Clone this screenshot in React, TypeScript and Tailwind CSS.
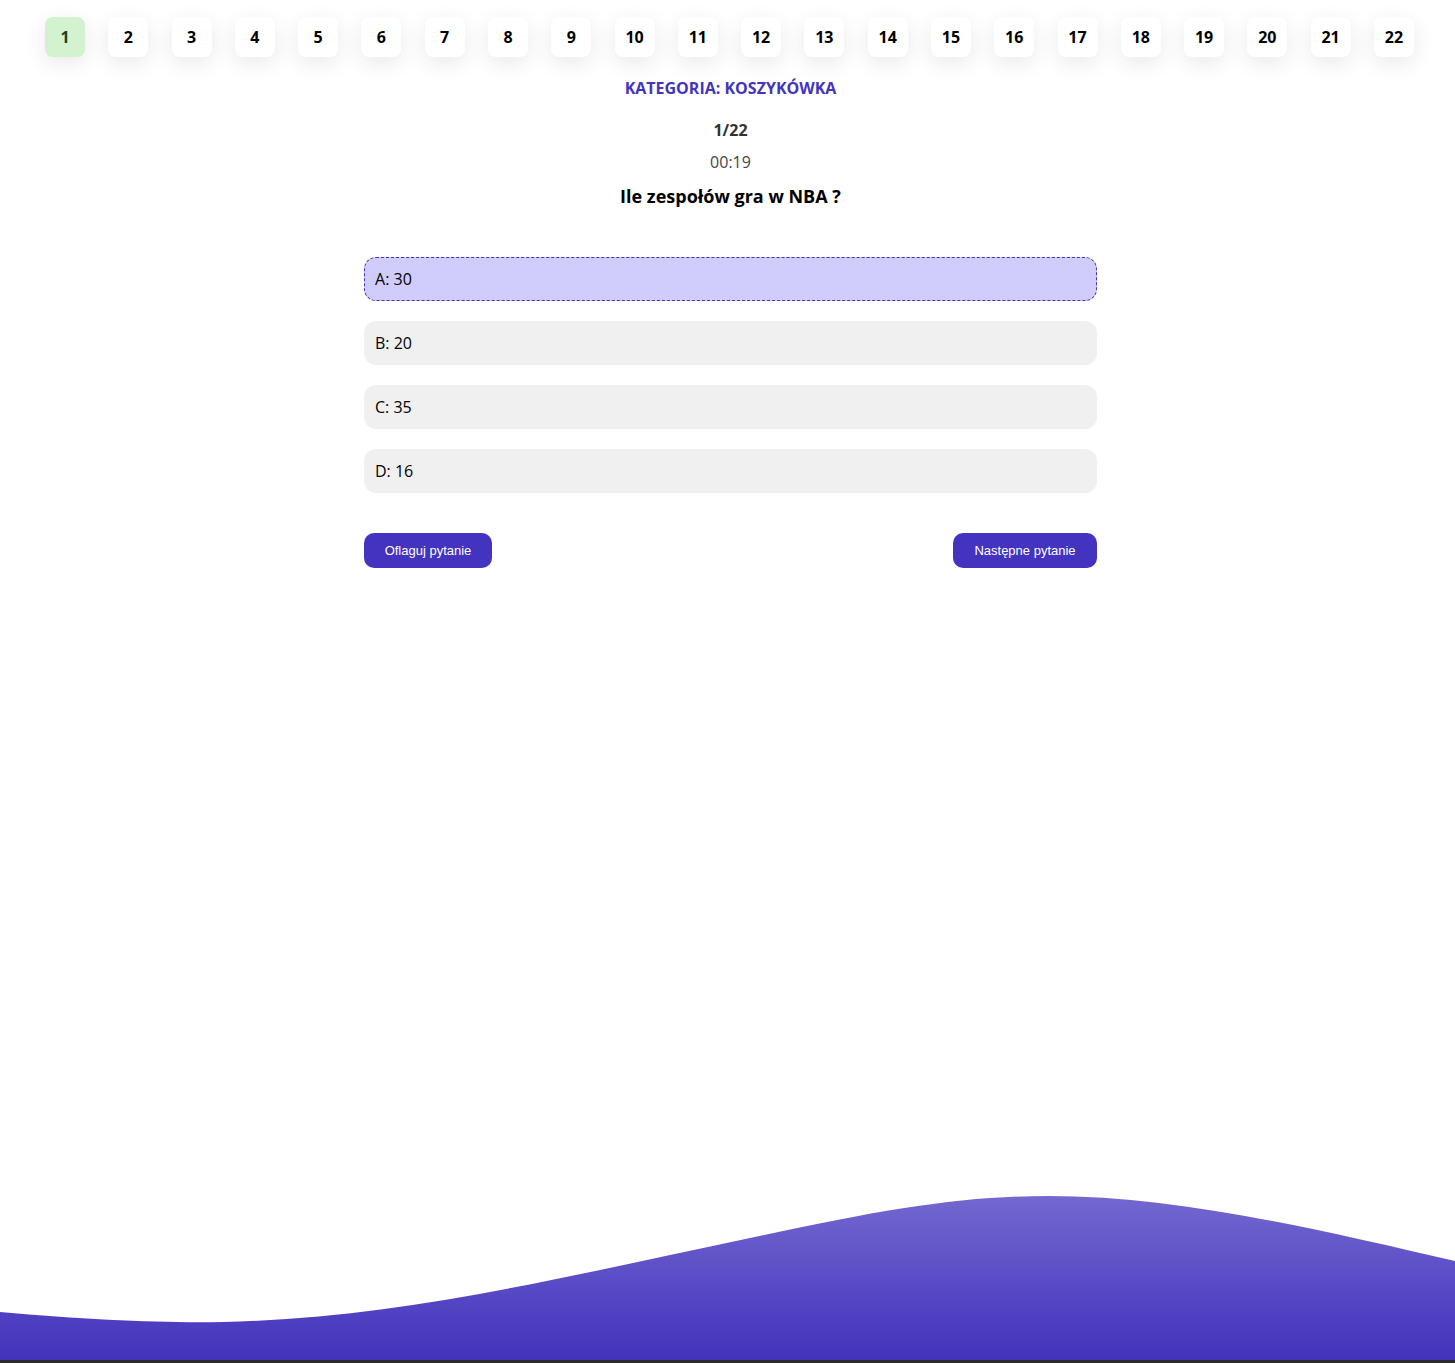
import { useState } from "react";

const answers = [
  { key: "A", text: "30" },
  { key: "B", text: "20" },
  { key: "C", text: "35" },
  { key: "D", text: "16" },
];

export default function App() {
  const [current] = useState(1);
  const [picked, setPicked] = useState("A");

  return (
    <div className="min-h-[1363px] flex flex-col bg-white font-['Open_Sans',sans-serif]">
      {/* Question numbers */}
      <nav className="flex justify-between pt-[17px] pl-[45px] pr-[41px]">
        {Array.from({ length: 22 }, (_, i) => i + 1).map((n) => (
          <button
            key={n}
            className={`w-10 h-10 rounded-lg flex items-center justify-center text-base font-bold shadow-[0_6px_22px_rgba(0,0,0,0.09)] ${
              n === current ? "bg-[#d3f2cf] text-[#1f3f1f]" : "bg-white text-black"
            }`}
          >
            {n}
          </button>
        ))}
      </nav>

      <main className="w-[733px] ml-[364px] flex flex-col items-center">
        <p className="mt-[19px] text-base leading-6 font-bold uppercase text-[#4333be]">
          Kategoria: Koszykówka
        </p>
        <p className="mt-[18px] text-base leading-6 font-bold text-[#333]">1/22</p>
        <p className="mt-2 text-base leading-6 text-[#444]">00:19</p>
        <h1 className="mt-2 text-lg leading-7 font-bold text-black">Ile zespołów gra w NBA ?</h1>

        {/* Answers */}
        <div className="mt-[47px] w-full flex flex-col gap-5">
          {answers.map((a) => (
            <button
              key={a.key}
              onClick={() => setPicked(a.key)}
              className={`h-11 w-full rounded-xl px-[10px] text-left text-base text-black border ${
                picked === a.key
                  ? "bg-[#d0ccfb] border-dashed border-[#4333be]"
                  : "bg-[#f0f0f0] border-transparent"
              }`}
            >
              {a.key}: {a.text}
            </button>
          ))}
        </div>

        {/* Actions */}
        <div className="mt-10 w-full flex justify-between font-['Liberation_Sans',Arial,sans-serif]">
          <button className="h-[35px] w-32 rounded-[10px] bg-[#4333be] text-white text-[13px] font-medium">
            Oflaguj pytanie
          </button>
          <button className="h-[35px] w-36 rounded-[10px] bg-[#4333be] text-white text-[13px] font-medium">
            Następne pytanie
          </button>
        </div>
      </main>

      {/* Wave at the bottom */}
      <svg className="mt-auto block w-full h-[170px]" viewBox="0 0 1455 170" preserveAspectRatio="none">
        <defs>
          <linearGradient id="wave" x1="0" y1="0" x2="0" y2="1">
            <stop offset="0%" stopColor="#7368d0" />
            <stop offset="100%" stopColor="#4232bc" />
          </linearGradient>
        </defs>
        <path
          d="M0,122 C90,130 160,133 223,132 C400,128 560,88 750,48 C880,20 960,6 1048,6 C1180,6 1320,40 1455,71 L1455,170 L0,170 Z"
          fill="url(#wave)"
        />
      </svg>
      <div className="h-[3px] bg-[#2b2b2b]" />
    </div>
  );
}
